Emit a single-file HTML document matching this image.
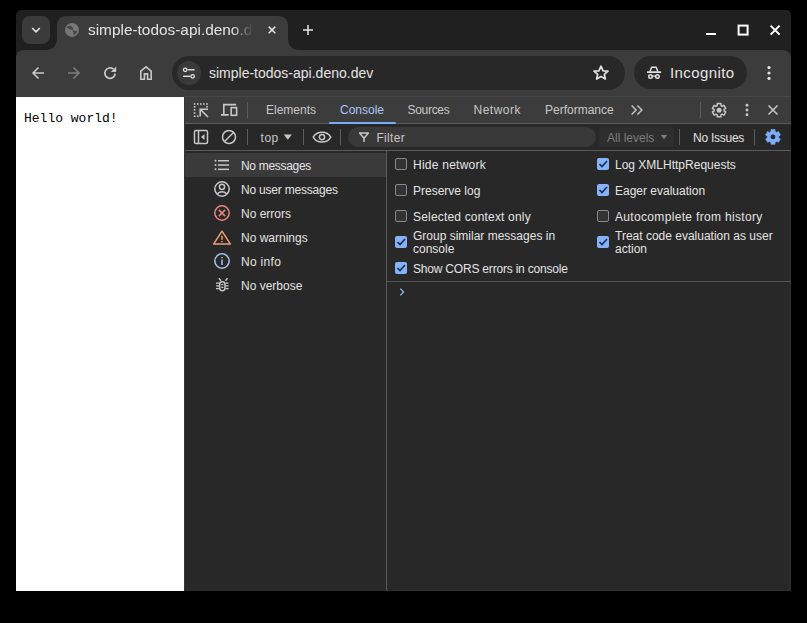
<!DOCTYPE html>
<html><head><meta charset="utf-8">
<style>
*{box-sizing:border-box;margin:0;padding:0}
html,body{width:807px;height:623px;background:#000;overflow:hidden;font-family:"Liberation Sans",sans-serif}
.a{position:absolute}
svg{position:absolute;overflow:visible}
#win{position:absolute;left:16px;top:10px;width:775px;height:581px;background:#202020;border-radius:5px 5px 0 0;overflow:hidden}
.t{position:absolute;white-space:nowrap;line-height:1}
.tab{position:absolute;top:103px;font-size:12px;color:#c7c7c7;line-height:14px}
.sb{position:absolute;left:241px;font-size:12px;color:#e3e3e3;line-height:14px}
.cb{position:absolute;font-size:12px;color:#e3e3e3;line-height:12px}
.box{position:absolute;width:12px;height:12px;border:1.5px solid #8a8a8a;border-radius:2px;background:#333}
.chk{position:absolute;width:12px;height:12px;background:#86b2f8;border-radius:2px}
</style></head><body>
<div id="win"></div>

<!-- tab strip -->
<div class="a" style="left:22px;top:16px;width:28px;height:28px;background:#3b3b3b;border-radius:8px"></div>
<!-- active tab -->
<svg style="left:0;top:0" width="807" height="623">
 <path d="M45 50 Q57 50 57 38 L57 26 Q57 16 67 16 L278 16 Q288 16 288 26 L288 38 Q288 50 300 50 Z" fill="#3c3c3c"/>
</svg>
<div class="t" style="left:88px;top:21px;font-size:15.4px;color:#e3e3e3;width:165px;overflow:hidden;line-height:17px;-webkit-mask-image:linear-gradient(90deg,#000 144px,transparent 165px)">simple-todos-api.deno.dev</div>

<!-- toolbar -->
<div class="a" style="left:16px;top:50px;width:775px;height:47px;background:#3c3c3c;border-radius:8px 8px 0 0"></div>
<div class="a" style="left:172px;top:56px;width:453px;height:34px;background:#282828;border-radius:17px"></div>
<div class="a" style="left:177px;top:61px;width:24px;height:24px;background:#3a3a3a;border-radius:12px"></div>
<div class="t" style="left:209px;top:65px;font-size:14px;color:#e3e3e3;line-height:16px">simple-todos-api.deno.dev</div>
<div class="a" style="left:634px;top:56px;width:113px;height:33px;background:#282828;border-radius:17px"></div>
<div class="t" style="left:670px;top:64px;font-size:15px;letter-spacing:0.4px;color:#e3e3e3;line-height:17px">Incognito</div>

<svg style="left:0;top:0" width="807" height="623">
 <!-- tab dropdown chevron -->
 <path d="M32.2 28 L36 31.8 L39.8 28" fill="none" stroke="#e3e3e3" stroke-width="1.6"/>
 <!-- favicon globe -->
 <circle cx="72" cy="29.9" r="7" fill="#777"/>
 <path d="M66.5 27.2 Q68.5 25 71 26 Q73 27 73.5 29.8 Q71.5 30 70 29.2 Q68 28.6 66.5 27.2 Z" fill="#474747"/>
 <path d="M72.2 30.4 Q75.5 30.2 77.2 31.6 Q76.2 34.3 73.6 35.3 Q74.6 32.8 72.2 30.4 Z" fill="#474747"/>
 <!-- tab close -->
 <path d="M268.7 26.6 L275.3 33.2 M275.3 26.6 L268.7 33.2" stroke="#e3e3e3" stroke-width="1.5"/>
 <!-- new tab plus -->
 <path d="M303 30 H313 M308 25 V35" stroke="#e3e3e3" stroke-width="1.5"/>
 <!-- window controls -->
 <rect x="706" y="33" width="10" height="2" fill="#fff"/>
 <rect x="738.6" y="25.6" width="9" height="9" fill="none" stroke="#fff" stroke-width="2"/>
 <path d="M770.6 25.6 L779.6 34.6 M779.6 25.6 L770.6 34.6" stroke="#fff" stroke-width="2"/>
 <!-- back / forward -->
 <path d="M44 73 H33 M38.5 67.5 L33 73 L38.5 78.5" fill="none" stroke="#c7c7c7" stroke-width="1.6"/>
 <path d="M68 73 H79 M73.5 67.5 L79 73 L73.5 78.5" fill="none" stroke="#7c7c7c" stroke-width="1.6"/>
 <!-- reload -->
 <path d="M115.2 73.6 A5.2 5.2 0 1 1 113.4 69.2" fill="none" stroke="#c7c7c7" stroke-width="1.7"/>
 <path d="M110.8 72 H116.2 V66.6 Z" fill="#c7c7c7"/>
 <!-- home -->
 <path d="M140.8 79.2 V71.2 L146 66.8 L151.2 71.2 V79.2 H147.6 V73.9 H144.4 V79.2 Z" fill="none" stroke="#c7c7c7" stroke-width="1.6" stroke-linejoin="miter"/>
 <!-- tune icon -->
 <circle cx="185.2" cy="69.8" r="1.75" fill="none" stroke="#e3e3e3" stroke-width="1.3"/>
 <path d="M187.8 69.8 H194.6" stroke="#e3e3e3" stroke-width="1.4"/>
 <circle cx="192.6" cy="76.3" r="1.75" fill="none" stroke="#e3e3e3" stroke-width="1.3"/>
 <path d="M183 76.3 H190" stroke="#e3e3e3" stroke-width="1.4"/>
 <!-- star -->
 <path d="M601 66.2 L603.1 70.8 L608 71.1 L604.3 74.4 L605.4 79 L601 76.5 L596.6 79 L597.7 74.4 L594 71.1 L598.9 70.8 Z" fill="none" stroke="#e3e3e3" stroke-width="1.7" stroke-linejoin="round"/>
 <!-- incognito -->
 <path d="M650 71.6 L651.6 67.2 H656.2 L657.8 71.6" fill="none" stroke="#e3e3e3" stroke-width="1.5" stroke-linejoin="round"/>
 <rect x="647" y="71.2" width="14.2" height="1.9" rx="0.5" fill="#e3e3e3"/>
 <circle cx="650.5" cy="76.4" r="1.75" fill="none" stroke="#e3e3e3" stroke-width="1.5"/>
 <circle cx="657.4" cy="76.4" r="1.75" fill="none" stroke="#e3e3e3" stroke-width="1.5"/>
 <path d="M652 76.1 H656" stroke="#e3e3e3" stroke-width="1.2"/>
 <!-- menu dots -->
 <circle cx="769" cy="67.6" r="1.6" fill="#e3e3e3"/>
 <circle cx="769" cy="73" r="1.6" fill="#e3e3e3"/>
 <circle cx="769" cy="78.4" r="1.6" fill="#e3e3e3"/>
</svg>

<!-- content -->
<div class="a" style="left:16px;top:97px;width:168px;height:494px;background:#fff"></div>
<div class="t" style="left:24px;top:111px;font-family:'Liberation Mono',monospace;font-size:13px;color:#000;line-height:15px">Hello world!</div>

<!-- devtools -->
<div class="a" style="left:184px;top:97px;width:607px;height:494px;background:#282828;border-left:1px solid #363636"></div>
<div class="a" style="left:185px;top:97px;width:606px;height:26px;background:#3c3c3c"></div>
<div class="a" style="left:184px;top:96px;width:607px;height:1px;background:#474747"></div>
<div class="a" style="left:16px;top:96px;width:168px;height:1px;background:#383838"></div>
<div class="a" style="left:185px;top:123px;width:606px;height:1px;background:#5b5b5b"></div>
<div class="a" style="left:185px;top:150px;width:606px;height:1px;background:#5b5b5b"></div>
<div class="a" style="left:386px;top:151px;width:1px;height:440px;background:#5b5b5b"></div>
<div class="a" style="left:185px;top:153px;width:201px;height:24px;background:#3a3a3a"></div>
<div class="a" style="left:789px;top:151px;width:2px;height:440px;background:#2d2d2d"></div>
<div class="a" style="left:387px;top:590px;width:404px;height:1px;background:#2d2d2d"></div>

<!-- devtools tabs -->
<div class="tab" style="left:266px">Elements</div>
<div class="tab" style="left:340px;color:#a8c7fa">Console</div>
<div class="tab" style="left:407.5px;letter-spacing:-0.3px">Sources</div>
<div class="tab" style="left:473.5px;letter-spacing:0.5px">Network</div>
<div class="tab" style="left:545px">Performance</div>
<div class="a" style="left:329px;top:122px;width:67px;height:2px;background:#7cacf8;border-radius:1px"></div>

<!-- console toolbar -->
<div class="t" style="left:260.6px;top:131px;font-size:12px;letter-spacing:0.45px;color:#c7c7c7;line-height:14px">top</div>
<div class="a" style="left:348px;top:127px;width:248px;height:20px;background:#393939;border-radius:10px"></div>
<div class="t" style="left:376.4px;top:131px;font-size:12px;letter-spacing:0.35px;color:#c7c7c7;line-height:14px">Filter</div>
<div class="a" style="left:599px;top:127px;width:75px;height:20px;background:#2e2e2e;border-radius:2px"></div>
<div class="t" style="left:607px;top:131px;font-size:12px;color:#7d7d7d;line-height:14px">All levels</div>
<div class="t" style="left:693px;top:131px;font-size:12px;letter-spacing:-0.25px;color:#e3e3e3;line-height:14px">No Issues</div>

<!-- sidebar -->
<div class="sb" style="top:159px;letter-spacing:-0.3px">No messages</div>
<div class="sb" style="top:183px;letter-spacing:-0.2px">No user messages</div>
<div class="sb" style="top:207px">No errors</div>
<div class="sb" style="top:231px">No warnings</div>
<div class="sb" style="top:255px;letter-spacing:0.3px">No info</div>
<div class="sb" style="top:279px">No verbose</div>

<!-- settings -->
<div class="box" style="left:395px;top:158px"></div>
<div class="cb" style="left:413px;top:159px;letter-spacing:0.25px">Hide network</div>
<div class="box" style="left:395px;top:184px"></div>
<div class="cb" style="left:413px;top:185px">Preserve log</div>
<div class="box" style="left:395px;top:210px"></div>
<div class="cb" style="left:413px;top:211px;letter-spacing:0.18px">Selected context only</div>
<div class="chk" style="left:395px;top:236px"></div>
<div class="cb" style="left:413px;top:229.5px;line-height:13px;white-space:normal;width:160px">Group similar messages in console</div>
<div class="chk" style="left:395px;top:262px"></div>
<div class="cb" style="left:413px;top:263px;letter-spacing:-0.2px">Show CORS errors in console</div>

<div class="chk" style="left:597px;top:158px"></div>
<div class="cb" style="left:615px;top:159px">Log XMLHttpRequests</div>
<div class="chk" style="left:597px;top:184px"></div>
<div class="cb" style="left:615px;top:185px">Eager evaluation</div>
<div class="box" style="left:597px;top:210px"></div>
<div class="cb" style="left:615px;top:211px;letter-spacing:0.33px">Autocomplete from history</div>
<div class="chk" style="left:597px;top:236px"></div>
<div class="cb" style="left:615px;top:229.5px;line-height:13px;white-space:normal;width:170px">Treat code evaluation as user action</div>

<div class="a" style="left:387px;top:281px;width:404px;height:1px;background:#555"></div>

<svg style="left:0;top:0" width="807" height="623">
 <!-- devtools icons -->
 <g fill="#c7c7c7">
  <rect x="193.8" y="103.2" width="1.6" height="1.6"/><rect x="196.9" y="103.2" width="1.6" height="1.6"/><rect x="200" y="103.2" width="1.6" height="1.6"/><rect x="203.1" y="103.2" width="1.6" height="1.6"/><rect x="206.2" y="103.2" width="1.6" height="1.6"/>
  <rect x="193.8" y="106" width="1.6" height="1.6"/><rect x="193.8" y="109.1" width="1.6" height="1.6"/><rect x="193.8" y="112.2" width="1.6" height="1.6"/><rect x="193.8" y="115.4" width="1.6" height="1.6"/>
  <rect x="206.2" y="106" width="1.6" height="1.6"/><rect x="196.9" y="115.4" width="1.6" height="1.6"/>
 </g>
 <path d="M200.2 116.6 V109.3 H208 M200.2 109.3 L208 117" fill="none" stroke="#c7c7c7" stroke-width="1.6"/>
 <g fill="none" stroke="#c7c7c7" stroke-width="1.6">
  <path d="M236.2 104.6 H223.8 V114.9 M221 114.9 H228.7"/>
  <rect x="231.2" y="107.6" width="5.4" height="7.7"/>
 </g>
 <rect x="247" y="102" width="1" height="16" fill="#5b5b5b"/>
 <path d="M631.6 105.5 L636.1 110 L631.6 114.5 M637.4 105.5 L641.9 110 L637.4 114.5" fill="none" stroke="#c2c2c2" stroke-width="1.5"/>
 <rect x="700" y="102" width="1" height="16" fill="#5b5b5b"/>
 <circle cx="747" cy="105.3" r="1.45" fill="#c7c7c7"/>
 <circle cx="747" cy="110" r="1.45" fill="#c7c7c7"/>
 <circle cx="747" cy="114.7" r="1.45" fill="#c7c7c7"/>
 <path d="M768.5 105.5 L777.5 114.5 M777.5 105.5 L768.5 114.5" stroke="#c7c7c7" stroke-width="1.5"/>

 <!-- console toolbar icons -->
 <rect x="194.5" y="130.5" width="13" height="13" rx="1.5" fill="none" stroke="#c7c7c7" stroke-width="1.5"/>
 <path d="M198.5 130.5 V143.5" stroke="#c7c7c7" stroke-width="1.5"/>
 <path d="M204.5 134 L201 137 L204.5 140 Z" fill="#c7c7c7"/>
 <circle cx="229" cy="137" r="6.5" fill="none" stroke="#c7c7c7" stroke-width="1.5"/>
 <path d="M224.5 141.5 L233.5 132.5" stroke="#c7c7c7" stroke-width="1.5"/>
 <rect x="247" y="129" width="1" height="16" fill="#5b5b5b"/>
 <path d="M283.8 134.6 H291.8 L287.8 139.8 Z" fill="#c7c7c7"/>
 <rect x="303" y="129" width="1" height="16" fill="#5b5b5b"/>
 <path d="M313.2 137.1 C315.5 133 318.5 132.2 322 132.2 C325.5 132.2 328.5 133 330.8 137.1 C328.5 141.2 325.5 142 322 142 C318.5 142 315.5 141.2 313.2 137.1 Z" fill="none" stroke="#c7c7c7" stroke-width="1.5"/>
 <circle cx="322" cy="137.1" r="2.6" fill="none" stroke="#c7c7c7" stroke-width="1.5"/>
 <rect x="340" y="129" width="1" height="16" fill="#5b5b5b"/>
 <path d="M359.6 132.9 H368.4 L364 138.2 Z M364 138 V142" fill="none" stroke="#c7c7c7" stroke-width="1.5" stroke-linejoin="round"/>
 <path d="M660.8 135 H667.2 L664 139.2 Z" fill="#7d7d7d"/>
 <rect x="679" y="129" width="1" height="16" fill="#5b5b5b"/>
 <rect x="754" y="129" width="1" height="16" fill="#5b5b5b"/>

 <!-- prompt -->
 <path d="M400.3 288.6 L403.6 292 L400.3 295.4" fill="none" stroke="#93b4e6" stroke-width="1.3"/>

 <!-- checkmarks -->
 <g fill="none" stroke="#122c52" stroke-width="1.6">
  <path d="M397.5 242 L400 244.5 L405 239"/>
  <path d="M397.5 268 L400 270.5 L405 265"/>
  <path d="M599.5 164 L602 166.5 L607 161"/>
  <path d="M599.5 190 L602 192.5 L607 187"/>
  <path d="M599.5 242 L602 244.5 L607 239"/>
 </g>

 <!-- sidebar icons -->
 <g fill="#c7c7c7">
  <circle cx="215.5" cy="160.7" r="1"/><circle cx="215.5" cy="165" r="1"/><circle cx="215.5" cy="169.3" r="1"/>
  <rect x="218" y="160" width="11" height="1.5"/><rect x="218" y="164.3" width="11" height="1.5"/><rect x="218" y="168.6" width="11" height="1.5"/>
 </g>
 <g fill="none" stroke="#c7c7c7" stroke-width="1.5">
  <circle cx="222" cy="189" r="7.2"/>
  <circle cx="222" cy="186.8" r="2.6"/>
  <path d="M217 194 Q222 189.5 227 194"/>
 </g>
 <g fill="none" stroke="#e98580" stroke-width="1.5">
  <circle cx="222" cy="213" r="7.2"/>
  <path d="M218.9 209.9 L225.1 216.1 M225.1 209.9 L218.9 216.1"/>
 </g>
 <g fill="none" stroke="#f29b76" stroke-width="1.5">
  <path d="M222 231.2 L230.4 244.1 H213.6 Z" stroke-linejoin="round"/>
  <path d="M222 235.8 V239.8 M222 240.9 V242.3"/>
 </g>
 <g fill="none" stroke="#a3c2f5" stroke-width="1.5">
  <circle cx="222" cy="261" r="7.2"/>
  <path d="M222 259.5 V265 M222 257 V258.3"/>
 </g>
 <g fill="none" stroke="#c7c7c7" stroke-width="1.5">
  <rect x="219.6" y="281.7" width="5.4" height="9" rx="2.7"/>
  <path d="M218.9 278.3 L220.9 280.7 M225.5 280.7 L227.5 278.3" stroke-width="1.5"/>
  <path d="M216 283.2 H219 M216 285.9 H219 M216 288.6 H219 M225.6 283.2 H228.5 M225.6 285.9 H228.5 M225.6 288.6 H228.5" stroke-width="1.3"/>
  <path d="M221.2 284.7 H223.4 M221.2 287.3 H223.4" stroke-width="1.2"/>
 </g>

 <!-- gear icons -->
 <path d="M720.99 105.57 L720.89 103.54 L717.31 103.54 L717.21 105.57 L716.04 106.25 L714.22 105.32 L712.44 108.41 L714.15 109.52 L714.15 110.88 L712.44 111.99 L714.22 115.08 L716.04 114.15 L717.21 114.83 L717.31 116.86 L720.89 116.86 L720.99 114.83 L722.16 114.15 L723.98 115.08 L725.76 111.99 L724.05 110.88 L724.05 109.52 L725.76 108.41 L723.98 105.32 L722.16 106.25 Z" fill="none" stroke="#c7c7c7" stroke-width="1.5" stroke-linejoin="round"/>
 <circle cx="719.1" cy="110.2" r="2.5" fill="#c7c7c7"/>
 <path d="M775.15 131.62 L774.99 129.46 L771.01 129.46 L770.85 131.62 L769.51 132.40 L767.56 131.46 L765.56 134.91 L767.35 136.13 L767.35 137.67 L765.56 138.89 L767.56 142.34 L769.51 141.40 L770.85 142.18 L771.01 144.34 L774.99 144.34 L775.15 142.18 L776.49 141.40 L778.44 142.34 L780.44 138.89 L778.65 137.67 L778.65 136.13 L780.44 134.91 L778.44 131.46 L776.49 132.40 Z" fill="#7cacf8" stroke="#7cacf8" stroke-width="0.6" stroke-linejoin="round"/>
 <circle cx="773" cy="136.9" r="2.4" fill="#282828"/>
</svg>

</body></html>
